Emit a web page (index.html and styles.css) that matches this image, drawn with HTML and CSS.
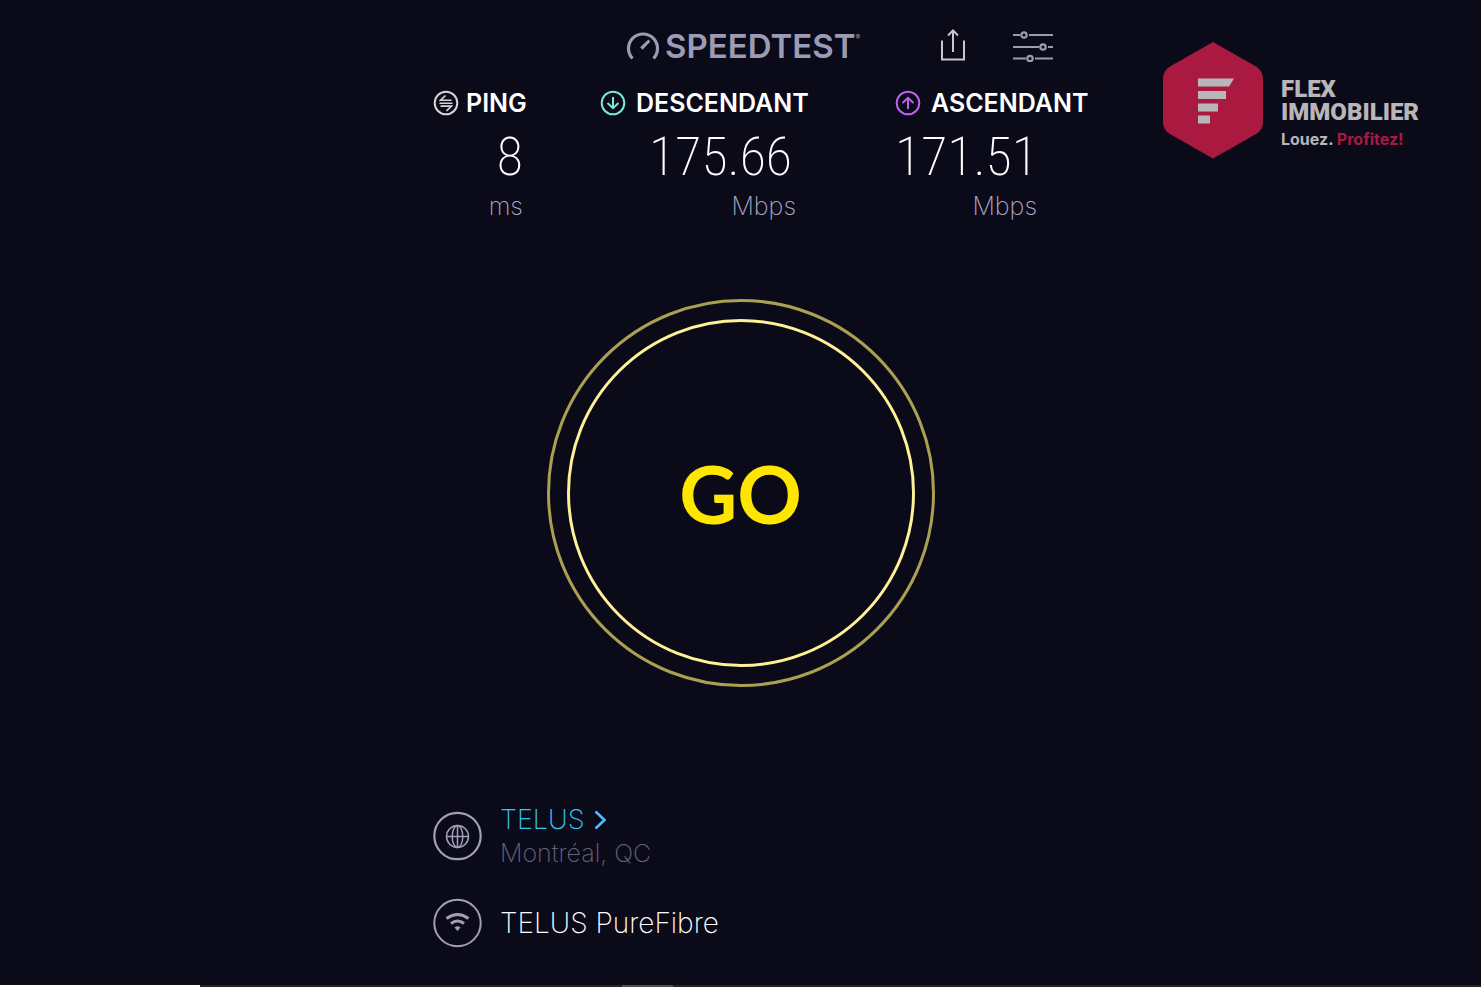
FILE: index.html
```html
<!DOCTYPE html>
<html lang="fr">
<head>
<meta charset="utf-8">
<title>Speedtest</title>
<link rel="stylesheet" href="styles.css">
</head>
<body>
<div class="page">
  <header class="top columns">
    <div class="panel">
      <div class="toolbar">
        <a class="logo" href="#">
          <svg class="gauge" viewBox="0 0 34 30" aria-hidden="true"><path d="M6.500 27.500A14.500 14.500 0 1 1 27.500 27.500" fill="none" stroke="currentColor" stroke-width="3.200"/><path d="M14.200 16.300 22.400 8.600 24.400 10.600 16.600 18.800Z" fill="currentColor"/></svg>
          <span>SPEEDTEST</span><sup>®</sup>
        </a>
        <button class="tool" aria-label="Partager">
          <svg width="26" height="34" viewBox="0 0 26 34" fill="none" stroke="#c9c8c8" stroke-width="2"><path d="M2 11.500V30.500H24V11.500"/><path d="M13 23V2M8 6.500 13 1.500 18 6.500"/></svg>
        </button>
        <button class="tool settings" aria-label="Réglages">
          <svg width="40" height="32" viewBox="0 0 40 32" fill="none" stroke="#9c9bb5" stroke-width="2.200"><path d="M0 5H7M16 5H40M0 17H26M35 17H40M0 28.500H13M22 28.500H40"/><circle cx="11" cy="5" r="2.700"/><circle cx="30" cy="17" r="2.700"/><circle cx="17" cy="28.500" r="2.700"/></svg>
        </button>
      </div>
      <section class="stats">
        <div class="stat ping">
          <h2><svg viewBox="0 0 26 26" fill="none" stroke="#d5d5d5" stroke-width="2"><circle cx="13" cy="13" r="11.300"/><path d="M18.500 10.300H7.500L12.500 5.500M6.500 13.200H19.500M7.500 16.100H18.500L13.500 20.800" stroke-width="1.600"/></svg>PING</h2>
          <p class="value">8</p><p class="unit">ms</p>
        </div>
        <div class="stat down">
          <h2><svg viewBox="0 0 26 26" fill="none" stroke="#78e8dc" stroke-width="2"><circle cx="13" cy="13" r="11.300"/><path d="M13 7V18M7.500 13 13 18.200 18.500 13"/></svg>DESCENDANT</h2>
          <p class="value">175.66</p><p class="unit">Mbps</p>
        </div>
        <div class="stat up">
          <h2><svg viewBox="0 0 26 26" fill="none" stroke="#bd62ec" stroke-width="2"><circle cx="13" cy="13" r="11.300"/><path d="M13 19V8M7.500 13 13 7.800 18.500 13"/></svg>ASCENDANT</h2>
          <p class="value">171.51</p><p class="unit">Mbps</p>
        </div>
      </section>
    </div>
    <div class="brand">
      <svg width="102" height="118" viewBox="0 0 102 118" aria-hidden="true"><path d="M51 1 94 25.500Q101 30 101 38V81Q101 89 94 93L51 117.500 8 93Q1 89 1 81V38Q1 30 8 25.500Z" fill="#aa1a40"/><path d="M36 37.500H72L67 45.500H36ZM36 50H64V58H36ZM36 62.500H56V70.500H36ZM36 74.500H48V82.500H36Z" fill="#b9b6ba"/></svg>
      <div class="words">
        <p class="name">FLEX<br>IMMOBILIER</p>
        <p class="tagline">Louez. <em>Profitez!</em></p>
      </div>
    </div>
  </header>

  <main class="stage">
    <button class="go"><span>GO</span></button>
  </main>

  <footer class="columns">
    <div class="links">
      <div class="row">
        <svg width="50" height="50" viewBox="0 0 50 50" fill="none" stroke="#a19fb7" stroke-width="1.500"><circle cx="24.500" cy="25" r="23.200" stroke-width="2.200"/><circle cx="24.500" cy="25.500" r="11"/><path d="M13.500 25.500H35.500M24.500 14.500V36.500"/><ellipse cx="24.500" cy="25.500" rx="5.300" ry="11"/></svg>
        <div>
          <a class="provider" href="#">TELUS<svg width="13" height="20" viewBox="0 0 13 20" fill="none" stroke="#4cbcff" stroke-width="2.600"><path d="M1.500 1.500 10.500 10 1.500 18.500"/></svg></a>
          <p class="city">Montréal, QC</p>
        </div>
      </div>
      <div class="row">
        <svg width="50" height="50" viewBox="0 0 50 50" fill="none" stroke="#a19fb7"><circle cx="24.500" cy="25" r="23.200" stroke-width="2"/><path d="M13.500 20.500Q24.500 12.500 35.500 20.500M18 25.500Q24.500 20.500 31 25.500" stroke-width="3"/><path d="M21.500 29.500Q24.500 27 27.500 29.500L24.500 33Z" fill="#a19fb7" stroke="none"/></svg>
        <p class="network">TELUS PureFibre</p>
      </div>
    </div>
  </footer>
  <div class="strip"><i class="light"></i><i class="grey"></i></div>
</div>
</body>
</html>
```
FILE: styles.css
```css
* { box-sizing: border-box; }
body { margin: 0; background: #0b0a19; color: #fff; font-family: Inter, "Liberation Sans", sans-serif; }
h2, p { margin: 0; }
svg { display: block; flex: none; }
button { padding: 0; border: 0; background: none; font: inherit; cursor: pointer; }
a { color: inherit; text-decoration: none; }
.page { min-height: 100vh; display: flex; flex-direction: column; }
.columns { display: grid; grid-template-columns: minmax(0, 433fr) 656px minmax(0, 392fr); }
.panel, .links { grid-column: 2; }
.toolbar { display: flex; align-items: center; height: 38px; margin-top: 27px; padding-left: 193px; }
.logo { display: flex; align-items: center; width: 234px; color: #9c9bb5; font-size: 33px; line-height: 38px; font-weight: 600; }
.gauge { width: 34px; height: 30px; margin-right: 5px; }
.logo sup { font-size: 7px; line-height: 8px; align-self: flex-start; margin-top: 7px; font-weight: 400; }
.tool { margin-left: 80px; }
.settings { margin-left: 47px; }
.stats { display: grid; grid-template-columns: 167px 295px 1fr; margin-top: 22px; }
.stat h2 { display: flex; align-items: center; gap: 7px; height: 32px; font-size: 25px; line-height: 32px; font-weight: 600; white-space: nowrap; }
.stat h2 svg { width: 26px; height: 26px; }
.down h2, .up h2 { gap: 10px; }
.value { height: 71px; font-family: "Roboto Condensed", Roboto, sans-serif; font-size: 54px; line-height: 76px; font-weight: 200; text-align: right; }
.unit { font-size: 25px; line-height: 32px; font-weight: 200; text-align: right; color: #aaa8c0; }
.stat { justify-self: start; }
.stat p { padding-right: 6px; }
.ping { width: 96px; }
.down { width: 202px; }
.down .value { padding-right: 10px; }
.up { width: 148px; }
.brand { grid-column: 3; justify-self: end; display: flex; align-items: flex-start; gap: 17px; margin: 41px 60px 0 0; color: #b9b6ba; }
.words { min-width: 140px; }
.name { margin-top: 37px; font-family: Roboto, sans-serif; font-size: 24px; line-height: 23px; font-weight: 900; }
.tagline { margin-top: 6px; font-size: 16px; line-height: 18px; font-weight: 700; }
.tagline em { font-style: normal; color: #aa1a40; }
.stage { flex: 1; display: flex; justify-content: center; align-items: flex-start; padding-top: 77px; }
.go { width: 388px; height: 388px; padding: 17px; border: 3px solid #aaa052; border-radius: 50%; color: #ffe600; font-family: Lato, Inter, sans-serif; font-size: 80px; font-weight: 700; }
.go span { display: flex; align-items: center; justify-content: center; height: 100%; border: 3px solid #fff196; border-radius: 50%; }
.links { display: flex; flex-direction: column; gap: 29px; padding-bottom: 37px; }
.row { display: flex; align-items: center; gap: 17px; min-height: 50px; }
.provider { display: flex; align-items: center; gap: 10px; color: #35c5f2; font-size: 27px; line-height: 34px; font-weight: 200; }
.city { font-size: 25px; line-height: 32px; font-weight: 200; color: #66647a; }
.network { font-size: 28px; line-height: 36px; font-weight: 200; }
.strip { display: flex; justify-content: space-between; height: 2px; background: #25251f; padding-right: calc(100% - 673px); }
.strip .light { width: 200px; background: #fff; }
.strip .grey { width: 51px; background: #504e52; }
```
